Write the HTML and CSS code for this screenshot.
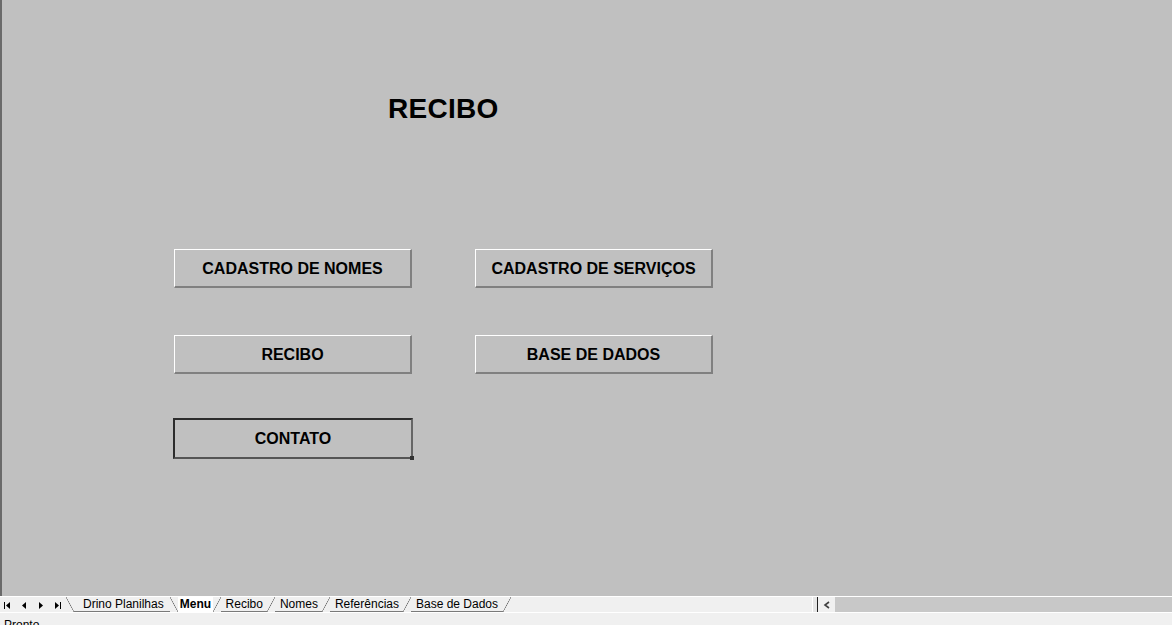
FILE: index.html
```html
<!DOCTYPE html>
<html lang="pt">
<head>
    <meta charset="UTF-8">
    <meta name="viewport" content="width=device-width, initial-scale=1.0">
    <title>Menu</title>
    <link rel="stylesheet" href="styles.css">
</head>
<body>
    <div class="window">
        <div class="sheet">
            <h1 class="title">RECIBO</h1>
            <div class="menu">
                <button class="btn">CADASTRO DE NOMES</button>
                <button class="btn">CADASTRO DE SERVIÇOS</button>
                <button class="btn">RECIBO</button>
                <button class="btn">BASE DE DADOS</button>
                <button class="btn selected">CONTATO</button>
            </div>
        </div>
        <div class="tabbar">
            <div class="tabs">
                <div class="nav">
                    <svg width="62" height="14" viewBox="0 0 62 14">
                        <rect x="4" y="4" width="1" height="7" fill="#000"/>
                        <path d="M6 7.5 L10 4 L10 11 Z" fill="#000"/>
                        <path d="M22 7.5 L26 4 L26 11 Z" fill="#000"/>
                        <path d="M43 7.5 L39 4 L39 11 Z" fill="#000"/>
                        <path d="M59 7.5 L55 4 L55 11 Z" fill="#000"/>
                        <rect x="60" y="4" width="1" height="7" fill="#000"/>
                    </svg>
                </div>
                <span class="sep back"></span>
                <span class="tab first">Drino Planilhas</span>
                <span class="sep back"></span>
                <span class="tab active">Menu</span>
                <span class="sep"></span>
                <span class="tab">Recibo</span>
                <span class="sep"></span>
                <span class="tab">Nomes</span>
                <span class="sep"></span>
                <span class="tab">Referências</span>
                <span class="sep"></span>
                <span class="tab">Base de Dados</span>
                <span class="sep"></span>
            </div>
            <div class="splitter"></div>
            <div class="scroll-left">
                <svg width="10" height="10" viewBox="0 0 10 10">
                    <path d="M7 2 L3 5 L7 8" fill="none" stroke="#404040" stroke-width="1.6"/>
                </svg>
            </div>
            <div class="track"></div>
        </div>
        <div class="status">Pronto</div>
    </div>
</body>
</html>
```

FILE: styles.css
```css
* {
    margin: 0;
    padding: 0;
    box-sizing: border-box;
}
body {
    width: 1172px;
    height: 625px;
    overflow: hidden;
    background: #f0f0f0;
    font-family: "Liberation Sans", Arial, sans-serif;
}
.window {
    display: flex;
    flex-direction: column;
    height: 625px;
}
.sheet {
    height: 596px;
    background: #c0c0c0;
    border-left: 2px solid #6a6a6a;
    padding-top: 93px;
}
.title {
    margin-left: 386px;
    font-size: 28px;
    line-height: 32px;
    font-weight: bold;
    letter-spacing: 0.3px;
    color: #000;
}
.menu {
    display: grid;
    grid-template-columns: 238px 238px;
    column-gap: 63px;
    margin-left: 172px;
    margin-top: 124px;
}
.btn {
    width: 238px;
    height: 39px;
    margin-bottom: 47px;
    background: #c0c0c0;
    border-top: 1px solid #fff;
    border-left: 1px solid #fff;
    border-right: 2px solid #808080;
    border-bottom: 2px solid #808080;
    font-family: "Liberation Sans", Arial, sans-serif;
    font-size: 16px;
    font-weight: bold;
    color: #000;
    padding-top: 1px;
}
.btn:nth-child(3), .btn:nth-child(4) {
    margin-bottom: 44px;
}
.btn.selected {
    position: relative;
    height: 41px;
    margin-left: -1px;
    width: 240px;
    border: 2px solid #2c2c2c;
    border-right-color: #666;
    border-bottom-color: #555;
}
.btn.selected::after {
    content: "";
    position: absolute;
    right: -3px;
    bottom: -3px;
    width: 4px;
    height: 4px;
    background: #333;
}
.tabbar {
    display: flex;
    height: 17px;
    border-top: 1px solid #fff;
    border-bottom: 1px solid #fff;
    background: #f0f0f0;
}
.tabs {
    display: flex;
    align-items: stretch;
    width: 812px;
    font-size: 12px;
    color: #000;
}
.nav {
    width: 66px;
    display: flex;
    align-items: center;
}
.tab {
    line-height: 15px;
    padding: 0 4.5px;
    white-space: nowrap;
    border-bottom: 1px solid #7a7a7a;
}
.tab.first {
    padding-left: 9px;
    padding-right: 6px;
}
.tab.active {
    font-weight: bold;
    background: #fff;
    border-bottom: none;
    padding: 0 2px;
}
.sep {
    width: 8px;
    background: linear-gradient(to top left, transparent calc(50% - 0.6px), #6a6a6a 50%, transparent calc(50% + 0.6px));
}
.sep.back {
    background: linear-gradient(to top right, transparent calc(50% - 0.6px), #6a6a6a 50%, transparent calc(50% + 0.6px));
}
.splitter {
    width: 6px;
    border-left: 1px solid #fff;
    border-right: 1px solid #222;
    background: #e6e6e6;
}
.scroll-left {
    width: 17px;
    display: flex;
    align-items: center;
    justify-content: center;
    background: #f0f0f0;
}
.track {
    flex: 1;
    background: #c8c8c8;
}
.status {
    flex: 1;
    font-size: 12px;
    line-height: 14px;
    padding: 5px 0 0 4px;
    overflow: hidden;
    color: #000;
    background: #f0f0f0;
}
```
